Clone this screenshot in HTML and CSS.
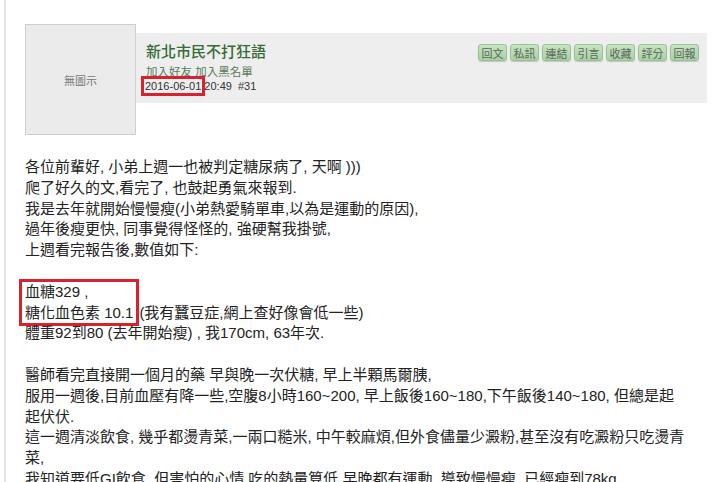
FILE: index.html
```html
<!DOCTYPE html>
<html lang="zh-Hant">
<head>
  <meta charset="UTF-8" />
  <title>新北市民不打狂語 #31</title>
  <link rel="stylesheet" href="styles.css">
</head>
<body>
  <div class="page">
    <div class="post">
      <div class="post-head">
        <div class="avatar">無圖示</div>
        <div class="head-bar">
          <div class="author">
            <div class="author-name">新北市民不打狂語</div>
            <div class="author-links"><a href="#">加入好友</a> <a href="#">加入黑名單</a></div>
            <div class="post-meta"><span class="mark-date">2016-06-01</span> 20:49 &nbsp;#31</div>
          </div>
          <div class="actions">
            <button>回文</button>
            <button>私訊</button>
            <button>連結</button>
            <button>引言</button>
            <button>收藏</button>
            <button>評分</button>
            <button>回報</button>
          </div>
        </div>
      </div>

      <div class="post-body">
        各位前輩好, 小弟上週一也被判定糖尿病了, 天啊 )))<br>
        爬了好久的文,看完了, 也鼓起勇氣來報到.<br>
        我是去年就開始慢慢瘦(小弟熱愛騎單車,以為是運動的原因),<br>
        過年後瘦更快, 同事覺得怪怪的, 強硬幫我掛號,<br>
        上週看完報告後,數值如下:<br>
        <br>
        <span class="mark-box">血糖329 ,<br>糖化血色素 10.1</span>(我有蠶豆症,網上查好像會低一些)<br>
        體重92到80 (去年開始瘦) , 我170cm, 63年次.<br>
        <br>
        醫師看完直接開一個月的藥 早與晚一次伏糖, 早上半顆馬爾胰,<br>
        服用一週後,目前血壓有降一些,空腹8小時160~200, 早上飯後160~180,下午飯後140~180, 但總是起<br>起伏伏.<br>
        這一週清淡飲食, 幾乎都燙青菜,一兩口糙米, 中午較麻煩,但外食儘量少澱粉,甚至沒有吃澱粉只吃燙青<br>菜,<br>
        我知道要低GI飲食, 但害怕的心情,吃的熱量算低,早晚都有運動, 導致慢慢瘦, 已經瘦到78kg.
      </div>
    </div>
  </div>
</body>
</html>
```

FILE: styles.css
```css
body {
  margin: 0;
  background: #fff;
  font-family: "Liberation Sans", "Noto Sans CJK TC", sans-serif;
  color: #222;
  overflow: hidden;
}

.page {
  margin-left: 4px;
  border-left: 2px solid #e4e4e4;
  min-height: 482px;
}

.post {
  padding: 24px 13px 0 19px;
}

.post-head {
  display: flex;
  align-items: flex-start;
}

.avatar {
  flex: none;
  width: 109px;
  height: 109px;
  border: 1px solid #cfcfcf;
  background: #ebebeb;
  color: #777;
  font-size: 11px;
  display: flex;
  align-items: center;
  justify-content: center;
  position: relative;
  z-index: 1;
}

.head-bar {
  flex: 1;
  margin-top: 9px;
  height: 70px;
  background: #eeeeee;
  display: flex;
  justify-content: space-between;
  align-items: flex-start;
  padding: 0 8px 0 10px;
}

.author {
  padding-top: 9px;
}

.author-name {
  font-size: 15px;
  line-height: 19px;
  color: #356b35;
  font-weight: 500;
}

.author-links {
  margin-top: 5px;
  font-size: 11.5px;
  line-height: 13px;
}

.author-links a {
  color: #5b7b58;
  text-decoration: none;
}

.post-meta {
  font-size: 11px;
  line-height: 14px;
  color: #333;
}

.mark-date {
  outline: 3px solid #d6232e;
  outline-offset: 1px;
  margin-left: -1px;
}

.actions {
  display: flex;
  gap: 3px;
  padding-top: 11px;
}

.actions button {
  width: 29px;
  font-family: "Noto Sans CJK TC", sans-serif;
  font-size: 11px;
  line-height: 14px;
  height: 17px;
  padding: 0;
  color: #5a665a;
  background: linear-gradient(#c6e3c2, #a9d0a5);
  border: 1px solid #98c194;
  border-radius: 3px;
  box-shadow: 0 1px 1px rgba(0, 0, 0, 0.18);
  cursor: pointer;
}

.post-body {
  margin-top: 22px;
  font-size: 15px;
  line-height: 20.8px;
  width: 684px;
}

.mark-box {
  display: inline-block;
  padding: 0 3px;
  margin: 0 3px 0 -3px;
  outline: 3px solid #d6232e;
}
```
